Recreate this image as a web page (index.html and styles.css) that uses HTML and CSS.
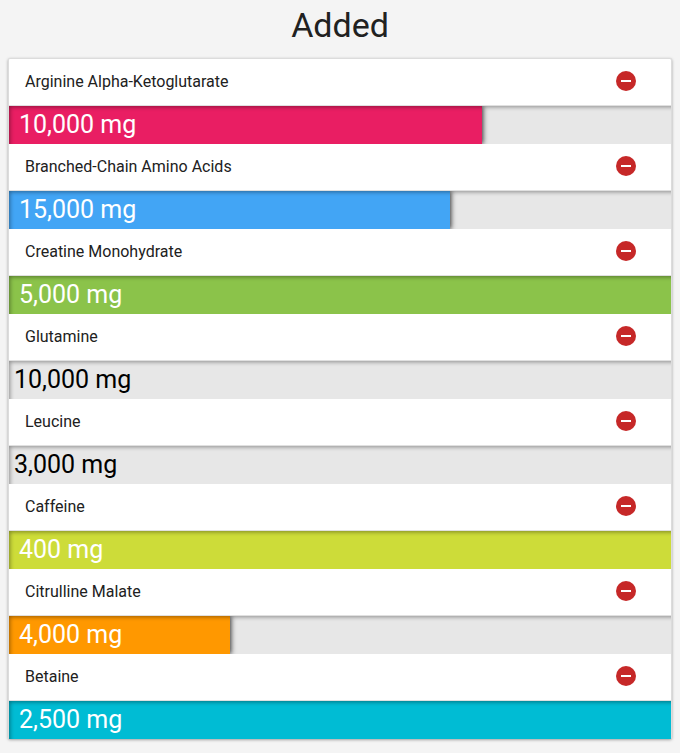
FILE: index.html
```html
<!DOCTYPE html>
<html lang="en">
<head>
<meta charset="utf-8">
<meta name="viewport" content="width=device-width, initial-scale=1">
<title>Added</title>
<link rel="stylesheet" href="styles.css">
</head>
<body>
<svg class="symbols" aria-hidden="true">
  <symbol id="minus" viewBox="0 0 20 20"><circle cx="10" cy="10" r="10" fill="#c62828"/><path d="M5 9h10v2H5z" fill="#fff"/></symbol>
</svg>
<main>
<h1>Added</h1>
<ul class="list">
  <li>
    <div class="row"><span class="name">Arginine Alpha-Ketoglutarate</span><button class="remove" type="button" aria-label="Remove Arginine Alpha-Ketoglutarate"><svg><use href="#minus"/></svg></button></div>
    <div class="track"><div class="fill pink" style="width:71.5%">10,000 mg</div></div>
  </li>
  <li>
    <div class="row"><span class="name">Branched-Chain Amino Acids</span><button class="remove" type="button" aria-label="Remove Branched-Chain Amino Acids"><svg><use href="#minus"/></svg></button></div>
    <div class="track"><div class="fill blue" style="width:66.6%">15,000 mg</div></div>
  </li>
  <li>
    <div class="row"><span class="name">Creatine Monohydrate</span><button class="remove" type="button" aria-label="Remove Creatine Monohydrate"><svg><use href="#minus"/></svg></button></div>
    <div class="track"><div class="fill green" style="width:100%">5,000 mg</div></div>
  </li>
  <li>
    <div class="row"><span class="name">Glutamine</span><button class="remove" type="button" aria-label="Remove Glutamine"><svg><use href="#minus"/></svg></button></div>
    <div class="track"><div class="fill empty" style="width:0%">10,000 mg</div></div>
  </li>
  <li>
    <div class="row"><span class="name">Leucine</span><button class="remove" type="button" aria-label="Remove Leucine"><svg><use href="#minus"/></svg></button></div>
    <div class="track"><div class="fill empty" style="width:0%">3,000 mg</div></div>
  </li>
  <li>
    <div class="row"><span class="name">Caffeine</span><button class="remove" type="button" aria-label="Remove Caffeine"><svg><use href="#minus"/></svg></button></div>
    <div class="track"><div class="fill lime" style="width:100%">400 mg</div></div>
  </li>
  <li>
    <div class="row"><span class="name">Citrulline Malate</span><button class="remove" type="button" aria-label="Remove Citrulline Malate"><svg><use href="#minus"/></svg></button></div>
    <div class="track"><div class="fill orange" style="width:33.4%">4,000 mg</div></div>
  </li>
  <li>
    <div class="row"><span class="name">Betaine</span><button class="remove" type="button" aria-label="Remove Betaine"><svg><use href="#minus"/></svg></button></div>
    <div class="track"><div class="fill cyan" style="width:100%">2,500 mg</div></div>
  </li>
</ul>
</main>
</body>
</html>
```
FILE: styles.css
```css
* { box-sizing: border-box; }
body { margin: 0; background: #f4f4f4; font-family: Roboto, sans-serif; color: #212121; }
.symbols { position: absolute; width: 0; height: 0; }
main { padding: 0 8px 13px; }
h1 { margin: 0; padding: 3px 0 11px; font-size: 34px; line-height: 44px; font-weight: 400; text-align: center; }
.list { list-style: none; margin: 0; padding: 0; background: #fff; border: 1px solid #dcdcdc; border-bottom: 0; border-radius: 2px; box-shadow: 0 1px 3px rgba(0,0,0,.35); }
.row { display: flex; align-items: center; justify-content: space-between; height: 47px; padding: 0 35px 2px 16px; border-bottom: 1px solid #e0e0e0; }
.name { padding-top: 2px; font-size: 16px; line-height: 24px; }
.remove { display: flex; width: 20px; height: 20px; padding: 0; border: 0; background: none; cursor: pointer; }
.remove svg { width: 20px; height: 20px; }
.track { position: relative; height: 38px; background: #e7e7e7; overflow: hidden; }
.track::after { content: ""; position: absolute; inset: 0 -8px -8px 0; box-shadow: inset 1px 1px 4px rgba(0,0,0,.4); pointer-events: none; }
.fill { height: 38px; padding-left: 10px; font-size: 25px; line-height: 38px; white-space: nowrap; color: #fff; box-shadow: 1px 0 5px rgba(0,0,0,.8); }
.empty { padding-left: 5px; color: #000; box-shadow: none; }
.pink { background: #e91e63; }
.blue { background: #42a5f5; }
.green { background: #8bc34a; }
.lime { background: #cddc39; }
.orange { background: #ff9800; }
.cyan { background: #00bcd4; }
```
